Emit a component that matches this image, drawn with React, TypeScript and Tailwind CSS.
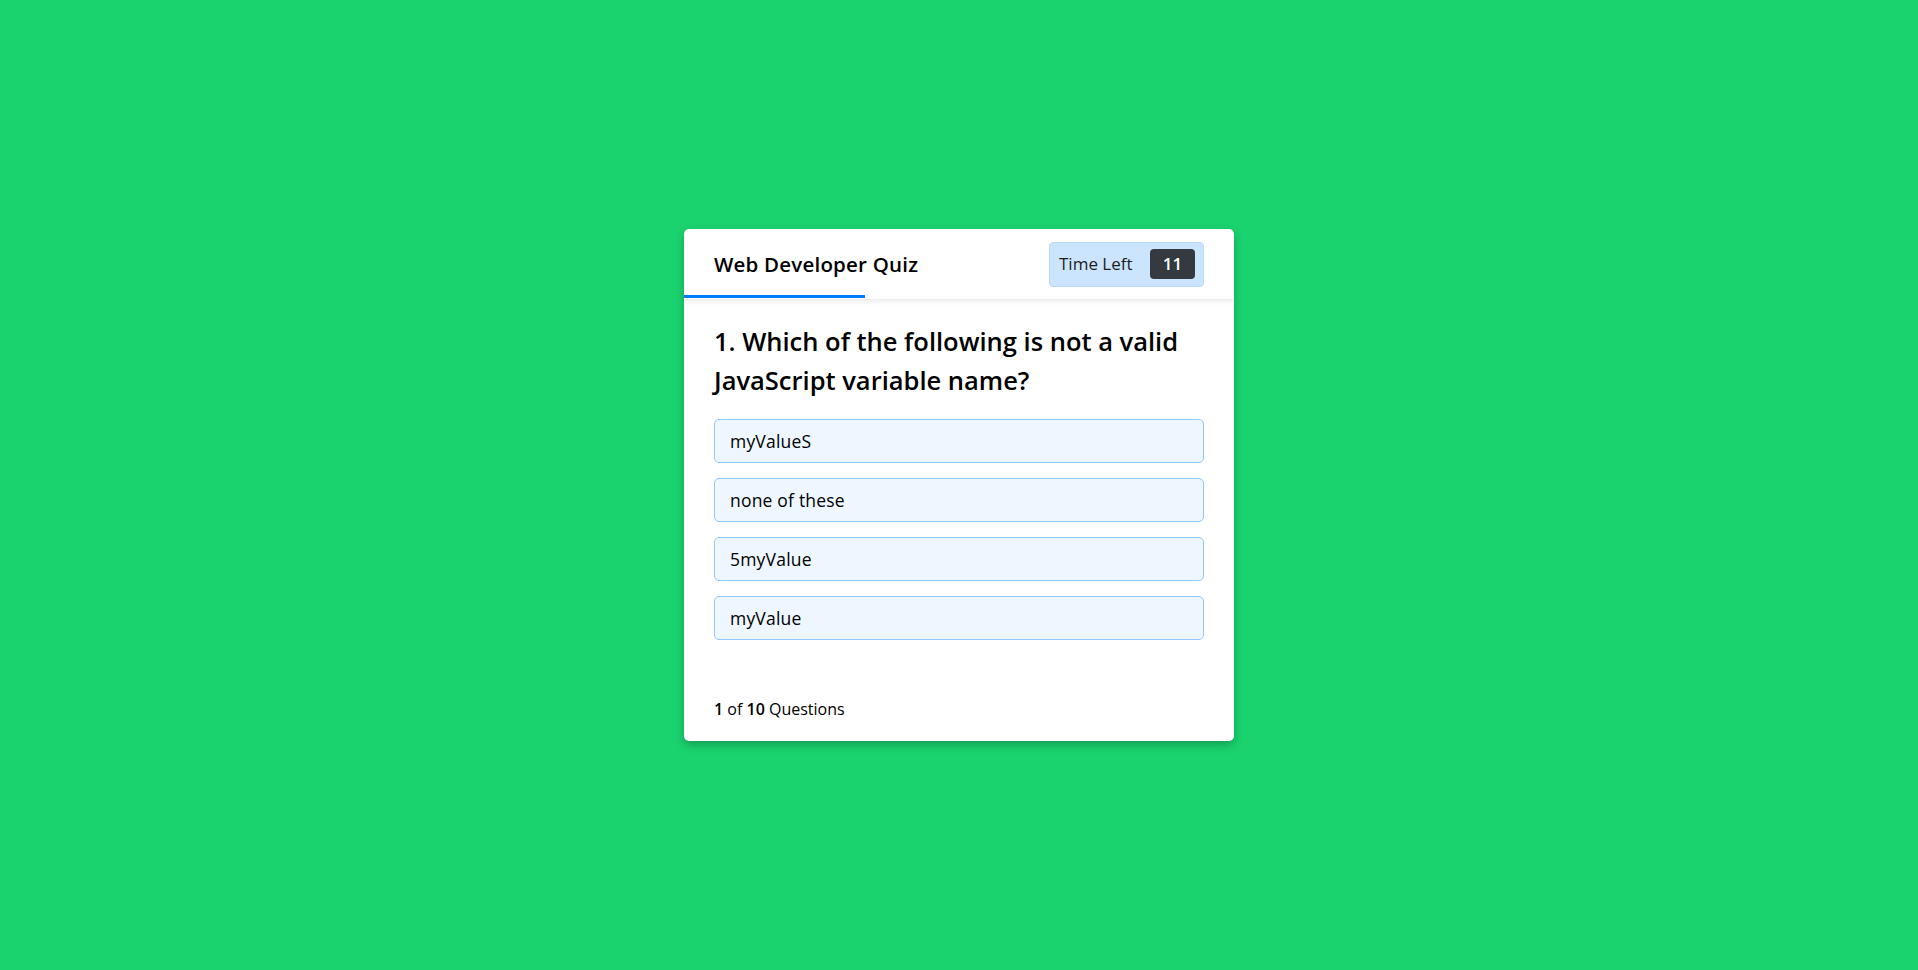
const options = ['myValueS', 'none of these', '5myValue', 'myValue']

export default function App() {
  return (
    <div
      className="h-[970px] w-full bg-[#1ad36f] flex items-center justify-center text-black"
      style={{ fontFamily: '"Open Sans", "Noto Sans", sans-serif' }}
    >
      <div className="w-[550px] bg-white rounded-[5px] shadow-[0_4px_10px_rgba(0,0,0,0.25)] overflow-hidden">
        {/* header */}
        <div className="relative h-[70px] flex items-center justify-between px-[30px] shadow-[0_3px_5px_rgba(0,0,0,0.08)]">
          <span className="text-[20.5px] font-semibold tracking-[0.2px]">Web Developer Quiz</span>
          <div className="h-[45px] w-[155px] flex items-center justify-between pl-[9px] pr-[8px] bg-[#cce5ff] border border-[#b8daff] rounded-[4px]">
            <span className="text-[17px] text-[#1b1e21]">Time Left</span>
            <span className="h-[30px] w-[45px] flex items-center justify-center rounded-[4px] bg-[#343a40] text-white text-[17px] font-semibold">
              11
            </span>
          </div>
          <div className="absolute left-0 bottom-[1px] h-[3px] w-[181px] bg-[#007bff]" />
        </div>

        {/* body */}
        <div className="px-[30px] pt-[23px] pb-[21px]">
          <h2 className="text-[25.5px] leading-[39px] font-semibold">
            1. Which of the following is not a valid JavaScript variable name?
          </h2>
          <div className="mt-[19px] flex flex-col gap-[15px]">
            {options.map((o) => (
              <div
                key={o}
                className="h-[44px] flex items-center px-[15px] bg-[#eef6ff] border border-[#8ec8ff] rounded-[5px] text-[17.5px] tracking-[0.2px]"
              >
                {o}
              </div>
            ))}
          </div>
          <p className="mt-[58px] text-[16px] leading-[22px]">
            <span className="font-semibold">1</span> of <span className="font-semibold">10</span> Questions
          </p>
        </div>
      </div>
    </div>
  )
}
